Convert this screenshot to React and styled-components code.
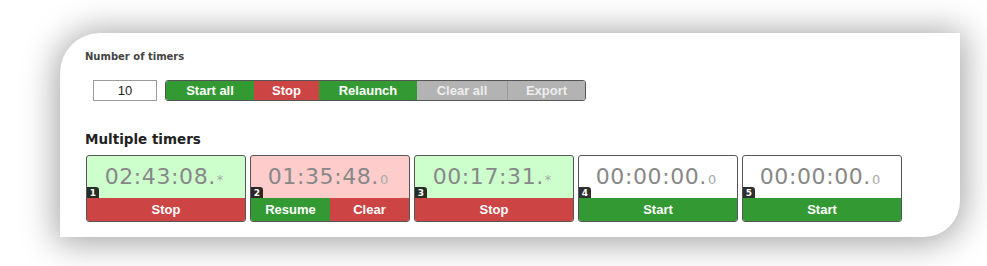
import { createGlobalStyle } from "styled-components";
import styled from "styled-components";

const GlobalStyle = createGlobalStyle`
  html, body {
    margin: 0;
    padding: 0;
    background: #fff;
  }
  body {
    font-family: "DejaVu Sans", Verdana, sans-serif;
  }
`;

const Page = styled.div`
  width: 987px;
  height: 266px;
  box-sizing: border-box;
  padding: 33px 27px 0 60px;
  overflow: hidden;
`;

const Sheet = styled.div`
  width: 900px;
  height: 204px;
  box-sizing: border-box;
  background: #fff;
  border-radius: 40px 0 36px 0;
  box-shadow: 0 2px 34px 4px rgba(0, 0, 0, 0.36);
  padding: 16px 0 0 25px;
  overflow: hidden;
`;

const Label = styled.div`
  font-size: 10px;
  font-weight: bold;
  line-height: 16px;
  color: #444;
`;

const Controls = styled.div`
  display: flex;
  align-items: center;
  gap: 8px;
  margin: 15px 0 0 8px;
`;

const CountInput = styled.input`
  width: 64px;
  height: 21px;
  box-sizing: border-box;
  border: 1px solid #9a9a9a;
  font-family: "Liberation Sans", Arial, sans-serif;
  font-size: 13px;
  text-align: center;
  color: #222;
  padding: 0;
  outline: none;
`;

const Group = styled.div`
  display: flex;
  height: 21px;
  border: 1px solid #555;
  border-radius: 3px;
  overflow: hidden;
  box-sizing: border-box;
`;

const colors = {
  green: "#339933",
  red: "#cc4444",
  gray: "#b3b3b3",
};

const GroupButton = styled.button`
  border: none;
  border-left: ${(p) => (p.$sep ? "1px solid #999" : "none")};
  margin: 0;
  padding: 0;
  width: ${(p) => p.$w}px;
  background: ${(p) => colors[p.$tone]};
  color: ${(p) => (p.$tone === "gray" ? "#eee" : "#fff")};
  font-family: "Liberation Sans", Arial, sans-serif;
  font-weight: bold;
  font-size: 13px;
  line-height: 19px;
`;

const Heading = styled.h2`
  margin: 29px 0 0;
  font-size: 13.5px;
  line-height: 18px;
  font-weight: bold;
  color: #222;
`;

const TimerRow = styled.div`
  display: flex;
  gap: 4px;
  margin: 7px 0 0 1px;
`;

const bgs = {
  running: "#ccffcc",
  paused: "#ffcccc",
  idle: "#ffffff",
};

const TimerCard = styled.div`
  width: 160px;
  height: 67px;
  box-sizing: border-box;
  border: 1px solid #555;
  border-radius: 3px;
  overflow: hidden;
  display: flex;
  flex-direction: column;
  background: ${(p) => bgs[p.$state]};
`;

const Display = styled.div`
  position: relative;
  height: 42px;
  display: flex;
  align-items: baseline;
  justify-content: center;
  padding: 7px 4px 0 0;
  box-sizing: border-box;
  font-size: 22px;
  line-height: 28px;
  letter-spacing: 0.6px;
  color: #888;
`;

const Tenth = styled.span`
  font-size: 13px;
  letter-spacing: 0;
  color: #aaa;
  margin-left: 1px;
`;

const Badge = styled.span`
  position: absolute;
  left: 0;
  bottom: 0;
  width: 12px;
  height: 11px;
  background: rgba(0, 0, 0, 0.82);
  border-radius: 0 3px 0 0;
  color: #fff;
  font-size: 9px;
  font-weight: bold;
  letter-spacing: 0;
  line-height: 12px;
  text-align: center;
`;

const Actions = styled.div`
  flex: 1;
  display: flex;
`;

const ActionButton = styled.button`
  flex: 1;
  border: none;
  margin: 0;
  padding: 0;
  background: ${(p) => colors[p.$tone]};
  color: #fff;
  font-family: "Liberation Sans", Arial, sans-serif;
  font-weight: bold;
  font-size: 13px;
`;

const timers = [
  { id: 1, state: "running", time: "02:43:08.", tenth: "*", actions: [["Stop", "red"]] },
  { id: 2, state: "paused", time: "01:35:48.", tenth: "0", actions: [["Resume", "green"], ["Clear", "red"]] },
  { id: 3, state: "running", time: "00:17:31.", tenth: "*", actions: [["Stop", "red"]] },
  { id: 4, state: "idle", time: "00:00:00.", tenth: "0", actions: [["Start", "green"]] },
  { id: 5, state: "idle", time: "00:00:00.", tenth: "0", actions: [["Start", "green"]] },
];

const App = () => {
  return (
    <>
      <GlobalStyle />
      <Page>
        <Sheet>
          <Label>Number of timers</Label>
          <Controls>
            <CountInput defaultValue="10" />
            <Group>
              <GroupButton $tone="green" $w={88}>Start all</GroupButton>
              <GroupButton $tone="red" $w={65}>Stop</GroupButton>
              <GroupButton $tone="green" $w={98}>Relaunch</GroupButton>
              <GroupButton $tone="gray" $w={90}>Clear all</GroupButton>
              <GroupButton $tone="gray" $sep $w={78}>Export</GroupButton>
            </Group>
          </Controls>
          <Heading>Multiple timers</Heading>
          <TimerRow>
            {timers.map((t) => (
              <TimerCard key={t.id} $state={t.state}>
                <Display>
                  {t.time}
                  <Tenth>{t.tenth}</Tenth>
                  <Badge>{t.id}</Badge>
                </Display>
                <Actions>
                  {t.actions.map(([label, tone]) => (
                    <ActionButton key={label} $tone={tone}>
                      {label}
                    </ActionButton>
                  ))}
                </Actions>
              </TimerCard>
            ))}
          </TimerRow>
        </Sheet>
      </Page>
    </>
  );
};

export default App;
